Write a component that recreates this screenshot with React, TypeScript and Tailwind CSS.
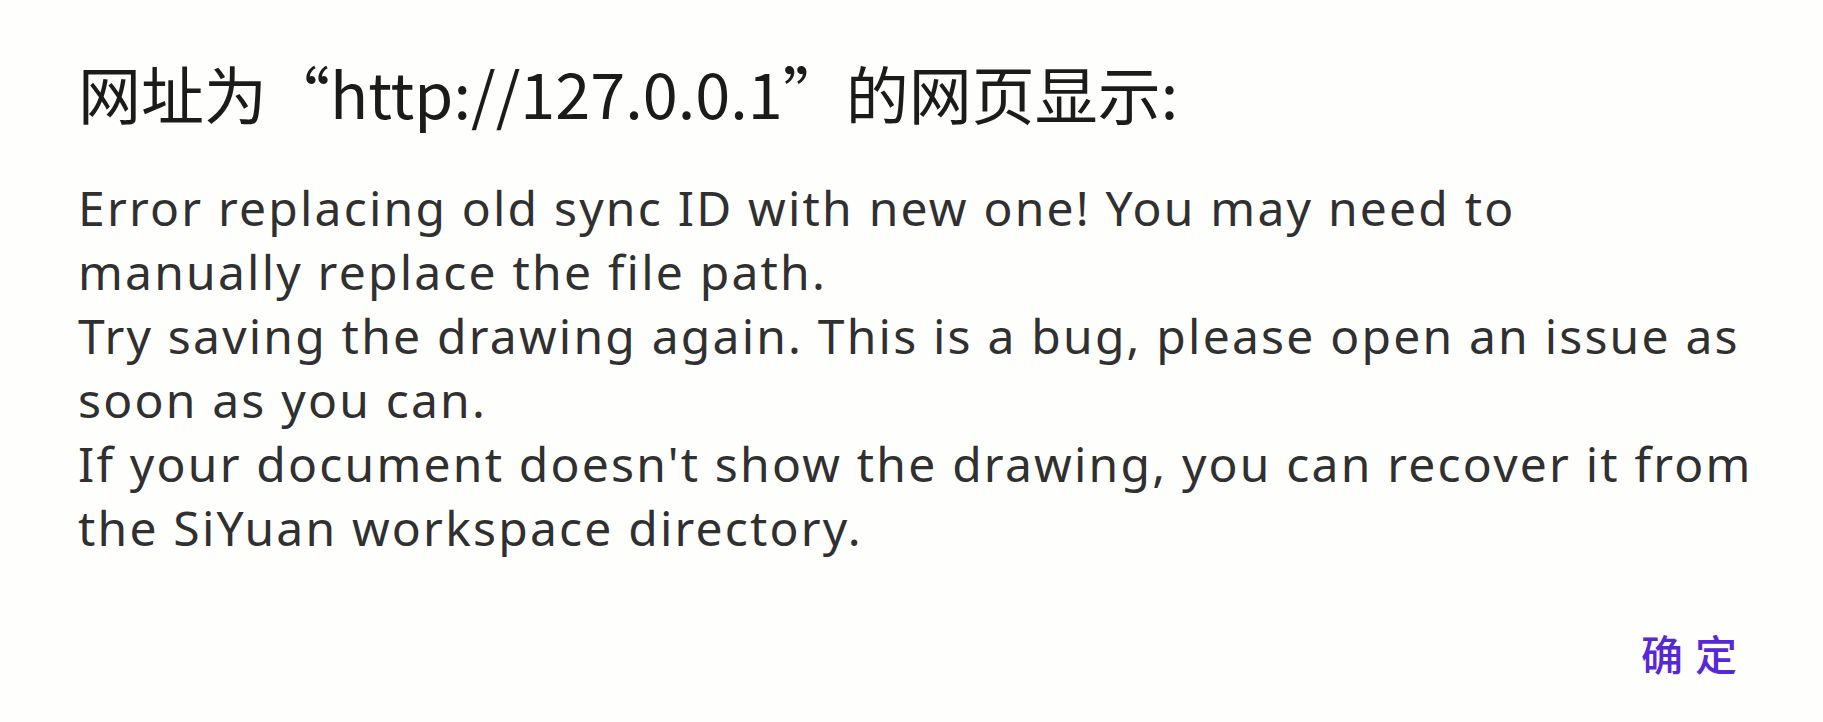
const lines = [
  "Error replacing old sync ID with new one! You may need to",
  "manually replace the file path.",
  "Try saving the drawing again. This is a bug, please open an issue as",
  "soon as you can.",
  "If your document doesn't show the drawing, you can recover it from",
  "the SiYuan workspace directory.",
];

const App = () => {
  return (
    <div className="w-[1823px] h-[722px] bg-[#fefefd] overflow-hidden flex flex-col pl-[78px] pr-[60px]">
      {/* Dialog title */}
      <h1 className="mt-[52px] text-[63px] leading-[80px] text-[#1b1b1b] font-['Noto_Sans_CJK_SC',sans-serif] font-normal whitespace-nowrap">
        网址为“http://127.0.0.1”的网页显示:
      </h1>

      {/* Message body */}
      <div className="mt-[44px] text-[48px] leading-[64px] tracking-[2.2px] text-[#303030] font-['Noto_Sans','Noto_Sans_CJK_SC',sans-serif]">
        {lines.map((line) => (
          <p key={line} className="whitespace-nowrap">
            {line}
          </p>
        ))}
      </div>

      {/* Actions */}
      <div className="flex justify-end mt-auto mb-[45px] pr-[14px]">
        <button className="text-[42px] leading-[48px] tracking-[12px] text-[#5728d6] font-['Noto_Sans_CJK_SC',sans-serif] font-medium">
          确定
        </button>
      </div>
    </div>
  );
};

export default App;
